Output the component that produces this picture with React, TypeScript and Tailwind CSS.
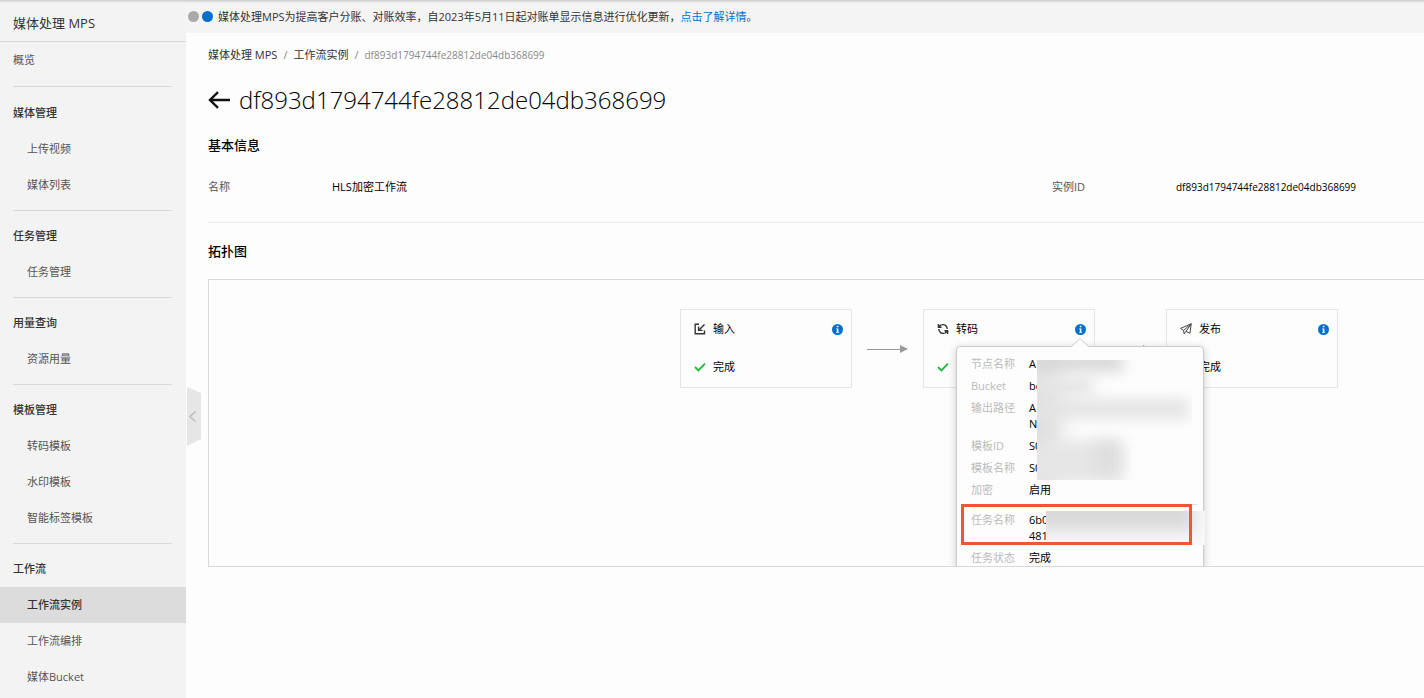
import React from 'react';
import clsx from 'clsx';

interface NavGroup {
  title: string;
  items: string[];
}

const groups: NavGroup[] = [
  { title: '媒体管理', items: ['上传视频', '媒体列表'] },
  { title: '任务管理', items: ['任务管理'] },
  { title: '用量查询', items: ['资源用量'] },
  { title: '模板管理', items: ['转码模板', '水印模板', '智能标签模板'] },
  { title: '工作流', items: ['工作流实例', '工作流编排', '媒体Bucket'] },
];

const activeItem = '工作流实例';
const instanceId = 'df893d1794744fe28812de04db368699';

const InputIcon = () => (
  <svg className="size-3" viewBox="0 0 12 12" fill="none" stroke="#333" strokeWidth="1.4">
    <path d="M5 1.2H1.2v9.6h9.3V7.5" />
    <path d="M10.5 1.5 5 7" />
    <path d="M4.6 3.6v3.8h3.9" />
  </svg>
);

const TranscodeIcon = () => (
  <svg className="size-3" viewBox="0 0 12 12" fill="none" stroke="#333" strokeWidth="1.4">
    <path d="M4.4 1.9C7.4.9 10.2 2.8 10.2 6" />
    <path d="M7.6 10.1C4.6 11.1 1.8 9.2 1.8 6" />
    <path d="M1.4 1v3.2h3.2M1.6 4 4 1.9" />
    <path d="M10.6 11V7.8H7.4M10.4 8 8 10.1" />
  </svg>
);

const PublishIcon = () => (
  <svg className="size-3" viewBox="0 0 12 12" fill="none" stroke="#444" strokeWidth="1" strokeLinejoin="round">
    <path d="M11.2.8.6 5.4l3 2L11.2.8 10 10.2 6 8.4l-1.8 2.6-.6-3.6" />
    <path d="M6 8.4 11.2.8" />
  </svg>
);

const CheckIcon = () => (
  <svg className="size-3" viewBox="0 0 12 12" fill="none" stroke="#1eb83a" strokeWidth="1.8">
    <path d="m1 6 3.4 3.4L11 2.6" />
  </svg>
);

const InfoIcon = () => (
  <svg className="size-[11px]" viewBox="0 0 11 11">
    <circle cx="5.5" cy="5.5" r="5.5" fill="#0070cc" />
    <path d="M4.8 1.8h1.6v1.4H4.8zM4.2 4.4h2.2v3.5h.7v.9H4.1v-.9h.7V5.3h-.6z" fill="#fff" />
  </svg>
);

const Arrow = () => (
  <svg className="mx-[15px] h-2 w-[41px] shrink-0" viewBox="0 0 41 8">
    <path d="M0 4.5h34" stroke="#999" />
    <path d="M33 0v8l8-4z" fill="#999" />
  </svg>
);

interface FlowNodeProps {
  icon: React.ReactNode;
  label: string;
}

const FlowNode: React.FC<FlowNodeProps> = ({ icon, label }) => (
  <div className="flex h-[79px] w-[172px] shrink-0 flex-col justify-between border border-[#e5e5e5] pt-[11px] pr-2 pb-3 pl-[13px]">
    <div className="flex h-4 items-center gap-[7px]">
      {icon}
      <span>{label}</span>
      <button aria-label={`${label}详情`} className="ml-auto">
        <InfoIcon />
      </button>
    </div>
    <div className="flex h-4 items-center gap-[7px]">
      <CheckIcon />
      <span>完成</span>
    </div>
  </div>
);

interface DetailRowProps {
  label: string;
  children: React.ReactNode;
}

const DetailRow: React.FC<DetailRowProps> = ({ label, children }) => (
  <div className="flex">
    <dt className="w-[58px] shrink-0 text-[#bbb]">{label}</dt>
    <dd>{children}</dd>
  </div>
);

const NodePopover = () => (
  <div className="absolute top-[66px] left-[747px] w-[248px] rounded border border-[#ccc] bg-[#fdfdfd] pt-[9px] leading-4 shadow-[0_2px_8px_rgba(0,0,0,0.2)]">
    <svg className="absolute -top-[9px] left-[114px] h-[9px] w-[18px]" viewBox="0 0 18 9">
      <path d="M0 9 9 .5 18 9" fill="#fdfdfd" stroke="#ccc" />
    </svg>
    <dl className="flex flex-col gap-[6px] pl-[14px]">
      <DetailRow label="节点名称">A</DetailRow>
      <DetailRow label="Bucket">bc</DetailRow>
      <DetailRow label="输出路径">A<br />N</DetailRow>
      <DetailRow label="模板ID">S0</DetailRow>
      <DetailRow label="模板名称">S0</DetailRow>
      <DetailRow label="加密">启用</DetailRow>
    </dl>
    <hr className="mx-[6px] mt-[6px] border-[#ddd]" />
    <dl className="flex flex-col gap-[6px] pt-[7px] pb-3 pl-[14px]">
      <DetailRow label="任务名称">6b0<br />481</DetailRow>
      <DetailRow label="任务状态">完成</DetailRow>
    </dl>
    {/* masked values */}
    <div className="absolute top-[13px] left-[80px] h-[120px] w-[155px] overflow-hidden bg-[#fdfdfd]">
      <div className="absolute -top-4 -left-8 h-40 w-14 bg-[#dfdfdf] blur-[10px]" />
      <div className="absolute -top-2 -left-2 h-5 w-[94px] bg-[#d8d8d8] blur-[7px]" />
      <div className="absolute top-4 -left-2 h-5 w-16 bg-[#e6e6e6] blur-[7px]" />
      <div className="absolute top-[39px] -left-2 h-5 w-[160px] bg-[#e4e4e4] blur-[7px]" />
      <div className="absolute top-[80px] -left-2 h-[44px] w-[94px] bg-[#e6e6e6] blur-[7px]" />
      <div className="absolute top-[82px] left-[58px] h-8 w-6 bg-[#dedede] blur-[7px]" />
    </div>
    <div className="absolute top-[164px] left-[89px] h-[34px] w-[159px] overflow-hidden bg-[#f8f8f8]">
      <div className="absolute -top-4 -left-4 h-9 w-[164px] bg-[#dadada] blur-[7px]" />
    </div>
    <div className="absolute top-[157px] left-1 h-[41px] w-[231px] border-[3px] border-[#f15533]" />
  </div>
);

const Sidebar = () => (
  <aside className="w-[186px] shrink-0 bg-[#f3f3f3] text-[#555]">
    <h2 className="flex h-[42px] items-center border-b border-[#d9d9d9] px-[13px] pt-1 text-[13px] text-[#333]">
      媒体处理 MPS
    </h2>
    <nav>
      <a href="#overview" className="mb-2 flex h-9 items-center px-[13px]">概览</a>
      {groups.map((group) => (
        <section key={group.title} className="group">
          <hr className="mr-[14px] mb-[7px] ml-[13px] border-[#d9d9d9] group-first-of-type:mb-2" />
          <h3 className="flex h-9 items-center px-[13px] font-medium text-[#333]">{group.title}</h3>
          <ul className="pb-[7px] group-last:pb-0">
            {group.items.map((item) => (
              <li key={item}>
                <a
                  href="#item"
                  className={clsx(
                    'flex h-9 items-center pl-[27px]',
                    item === activeItem && 'bg-[#dcdcdc] font-medium text-[#333]'
                  )}
                >
                  {item}
                </a>
              </li>
            ))}
          </ul>
        </section>
      ))}
    </nav>
  </aside>
);

export default function App() {
  return (
    <div className="relative flex min-h-screen overflow-hidden bg-[#fdfdfd] font-['Open_Sans','Noto_Sans_CJK_SC',sans-serif] text-[11px] leading-4 text-black">
      <div className="absolute inset-x-0 top-0 h-[3px] bg-linear-to-b from-[#ccc] to-transparent" />
      <Sidebar />
      <button aria-label="收起菜单" className="absolute top-[387px] left-[187px]">
        <svg className="h-[59px] w-[14px]" viewBox="0 0 14 59">
          <path d="M0 0 14 6v46L0 59z" fill="#e6e6e6" />
          <path d="M8.5 24.5 3 29.5l5.5 5" fill="none" stroke="#bbb" strokeWidth="1.4" />
        </svg>
      </button>
      <main className="min-w-0 flex-1">
        <div className="flex h-[33px] items-center bg-[#f4f4f4] pl-[2px] text-[#333]">
          <span className="size-[11px] rounded-full bg-[#aaa]" />
          <span className="ml-[3px] size-[11px] rounded-full bg-[#0070cc]" />
          <p className="ml-[5px]">
            媒体处理MPS为提高客户分账、对账效率，自2023年5月11日起对账单显示信息进行优化更新，
            <a href="#detail" className="text-[#0070cc]">点击了解详情</a>。
          </p>
        </div>
        <div className="pl-[22px]">
          <div className="flex gap-[6px] pt-[14px] text-[#333]">
            <a href="#mps">媒体处理 MPS</a>
            <span className="text-[#888]">/</span>
            <a href="#instances">工作流实例</a>
            <span className="text-[#888]">/</span>
            <span className="text-[10px] text-[#888]">{instanceId}</span>
          </div>
          <div className="mt-[21px] flex h-8 items-center gap-2">
            <button aria-label="返回">
              <svg className="h-[18px] w-[23px]" viewBox="0 0 23 18" fill="none" stroke="#111" strokeWidth="2.4">
                <path d="M22 9H2M10 1.2 2 9l8 7.8" />
              </svg>
            </button>
            <h1 className="text-[24px] font-light">{instanceId}</h1>
          </div>
          <h2 className="mt-[19px] text-[13px] leading-5 font-medium">基本信息</h2>
          <dl className="mt-6 mr-5 flex">
            <dt className="w-[124px] shrink-0 text-[#555]">名称</dt>
            <dd className="flex-1">HLS加密工作流</dd>
            <dt className="w-[124px] shrink-0 text-[#555]">实例ID</dt>
            <dd className="w-[228px] text-[10px]">{instanceId}</dd>
          </dl>
          <hr className="mt-[27px] border-[#eee]" />
          <h2 className="mt-[18px] text-[13px] leading-5 font-medium">拓扑图</h2>
          <div className="relative mt-[18px] h-[288px] overflow-hidden border border-r-0 border-[#d9d9d9]">
            <div className="flex items-center pt-[29px] pl-[471px]">
              <FlowNode icon={<InputIcon />} label="输入" />
              <Arrow />
              <FlowNode icon={<TranscodeIcon />} label="转码" />
              <Arrow />
              <FlowNode icon={<PublishIcon />} label="发布" />
            </div>
            <NodePopover />
          </div>
        </div>
      </main>
    </div>
  );
}
